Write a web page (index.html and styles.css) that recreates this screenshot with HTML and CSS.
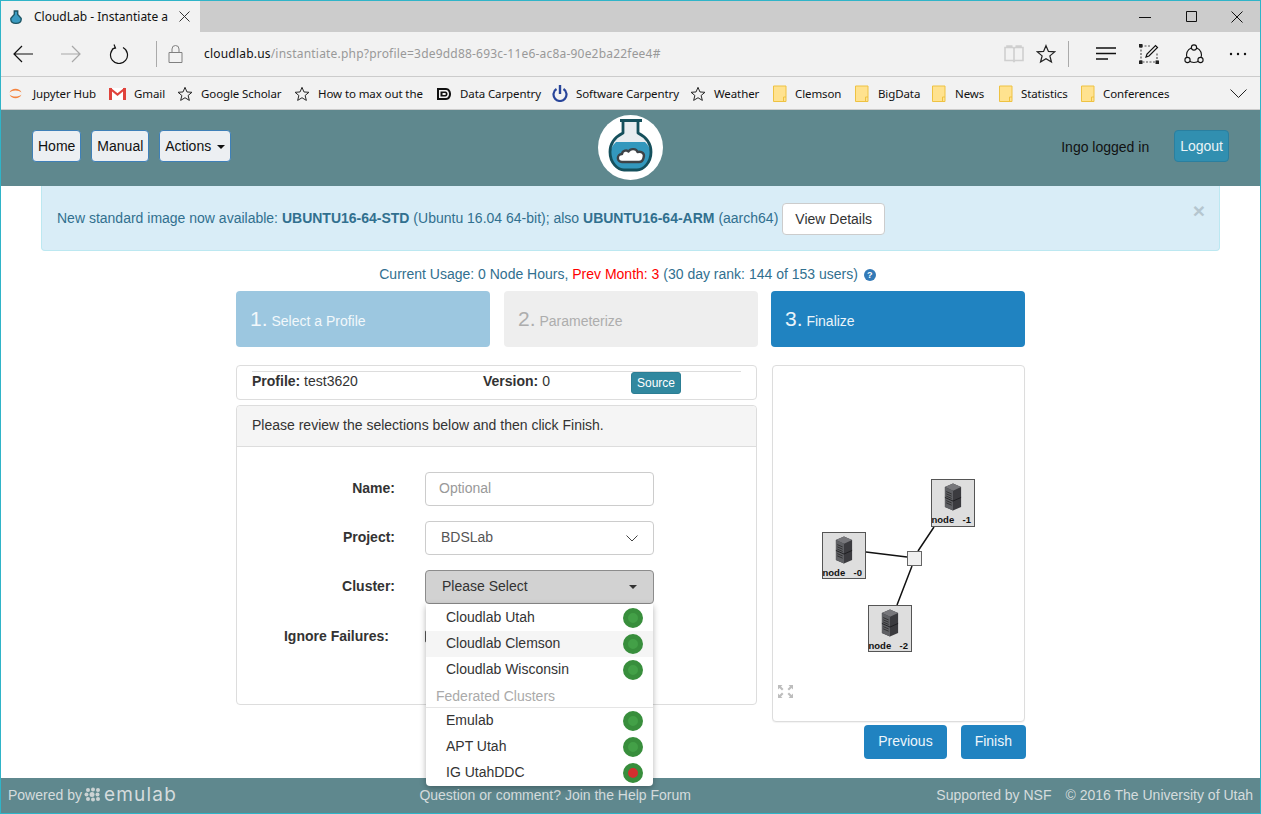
FILE: index.html
```html
<!DOCTYPE html>
<html lang="en">
<head>
  <meta charset="UTF-8">
  <title>CloudLab - Instantiate a Profile</title>
  <link rel="stylesheet" href="styles.css">
</head>
<body>
  <svg class="defs" width="0" height="0">
    <symbol id="star" viewBox="0 0 18 18"><path d="M9 1.500l2.200 5.200 5.600.4-4.300 3.600 1.400 5.500L9 13.200l-4.900 3 1.400-5.500L1.200 7.100l5.600-.4z" fill="none" stroke="#222" stroke-width="1.100"/></symbol>
    <symbol id="folder" viewBox="0 0 14 18"><path d="M.5 1h12.500v15.500H.5z" fill="#ffe28f" stroke="#eec242"/><path d="M10.500 16.500V12h2.500" fill="none" stroke="#eec242"/></symbol>
    <symbol id="server" viewBox="0 0 20 30">
      <path d="M10 0l9 4v22l-9 4-9-4V4z" fill="#3b3b3f"/>
      <path d="M10 0l9 4-9 4-9-4z" fill="#77777b"/>
      <path d="M1 4l9 4v22l-9-4z" fill="#5f6064"/>
      <path d="M2.500 9l6 2.600M2.500 11.500l6 2.600M2.500 14l6 2.600M2.500 19l6 2.600M2.500 21.500l6 2.600" stroke="#2c2c2e" stroke-width="1"/>
      <path d="M1 15.500l9 4 9-4" fill="none" stroke="#1d1d1f" stroke-width="1"/>
    </symbol>
  </svg>

  <div class="tabstrip">
    <div class="tab">
      <svg class="tab-icon" width="12" height="16" viewBox="0 0 14 16"><path d="M5 1h4v4l4 4.500c.5 4-2 6-6 6s-6.500-2-6-6L5 5z" fill="#3a9bc1" stroke="#1c5564" stroke-width="1.600"/></svg>
      <span class="tab-title">CloudLab - Instantiate a</span>
      <svg class="tab-close" width="11" height="11" viewBox="0 0 11 11"><path d="M.5.5l10 10M10.500.5l-10 10" stroke="#333" fill="none"/></svg>
    </div>
    <div class="window-controls">
      <svg width="12" height="12" viewBox="0 0 12 12"><path d="M0 6.500h12" stroke="#111"/></svg>
      <svg width="12" height="12" viewBox="0 0 12 12"><path d="M1.500.5h10v10h-10z" stroke="#111" fill="none"/></svg>
      <svg width="12" height="12" viewBox="0 0 12 12"><path d="M.5.5l11 11M11.500.5l-11 11" stroke="#111" fill="none"/></svg>
    </div>
  </div>

  <div class="toolbar">
    <svg class="tb-back" width="20" height="18" viewBox="0 0 20 18"><path d="M20 9H1M9 1L1 9l8 8" fill="none" stroke="#111" stroke-width="1.200"/></svg>
    <svg class="tb-forward" width="20" height="18" viewBox="0 0 20 18"><path d="M0 9h19M11 1l8 8-8 8" fill="none" stroke="#a8a8a8" stroke-width="1.200"/></svg>
    <svg class="tb-refresh" width="20" height="20" viewBox="0 0 20 20"><path d="M6 3.500a8.500 8.500 0 1 0 8 0M5 .5l1.500 3.500-3.500 1" fill="none" stroke="#111" stroke-width="1.200"/></svg>
    <span class="tb-sep tb-sep-first"></span>
    <svg class="tb-lock" width="15" height="18" viewBox="0 0 15 18"><path d="M1 7.500h13v10H1zM4 7.500V4a3.500 3.500 0 0 1 7 0v3.500" fill="none" stroke="#808080"/></svg>
    <div class="url"><span class="url-host">cloudlab.us</span>/instantiate.php?profile=3de9dd88-693c-11e6-ac8a-90e2ba22fee4#</div>
    <svg class="tb-reading" width="20" height="18" viewBox="0 0 20 18"><path d="M1 2.500h8l1 1 1-1h8v13h-8l-1 1-1-1H1zM10 3.500v13M3 2.500V1h5.500M17 2.500V1h-5.500" fill="none" stroke="#cfcfcf" stroke-width="1.600"/></svg>
    <svg class="tb-fav" width="20" height="20"><use href="#star"/></svg>
    <span class="tb-sep tb-sep-second"></span>
    <svg class="tb-hub" width="20" height="16" viewBox="0 0 20 16"><path d="M0 2h20M0 7.500h20M0 13h12" stroke="#111" stroke-width="1.300"/></svg>
    <svg class="tb-note" width="20" height="20" viewBox="0 0 20 20"><path d="M2 2v16h16V9M2 2h10" fill="none" stroke="#555" stroke-width="1.200" stroke-dasharray="2 1.500"/><path d="M7 13l1-3 8.500-8.500 2 2L10 12z" fill="none" stroke="#111" stroke-width="1.200"/><path d="M0 0h3.500v3.500H0zM0 16.500h3.500V20H0zM16.500 16.500H20V20h-3.500z" fill="#222"/></svg>
    <svg class="tb-share" width="20" height="20" viewBox="0 0 20 20"><circle cx="10" cy="11" r="7.500" fill="none" stroke="#111" stroke-width="1.100"/><circle cx="10" cy="3.500" r="2.600" fill="#f2f2f2" stroke="#111" stroke-width="1.100"/><circle cx="3.500" cy="16" r="2.600" fill="#f2f2f2" stroke="#111" stroke-width="1.100"/><circle cx="16.500" cy="16" r="2.600" fill="#f2f2f2" stroke="#111" stroke-width="1.100"/></svg>
    <svg class="tb-more" width="18" height="4" viewBox="0 0 18 4"><circle cx="2" cy="2" r="1.200" fill="#111"/><circle cx="9" cy="2" r="1.200" fill="#111"/><circle cx="16" cy="2" r="1.200" fill="#111"/></svg>
  </div>

  <div class="bookmarks">
    <a class="bm bm-jupyter">
      <svg width="13" height="13" viewBox="0 0 13 13"><path d="M.5 5.500C2.500.5 10.500.5 12.500 5.500 9.500 2.800 3.500 2.800.5 5.500zM.5 7.500c2 5 10 5 12 0-3 2.700-9 2.700-12 0z" fill="#f5843f"/></svg>
      Jupyter Hub
    </a>
    <a class="bm bm-gmail">
      <svg width="17" height="13" viewBox="0 0 17 13"><path d="M0 1h17v12H0z" fill="#fff"/><path d="M1.500 1v12M15.500 1v12" stroke="#e0433c" stroke-width="3"/><path d="M1 1.500l7.500 6 7.500-6" fill="none" stroke="#e0433c" stroke-width="2.200"/></svg>
      Gmail
    </a>
    <a class="bm bm-scholar"><svg width="16" height="18"><use href="#star"/></svg>Google Scholar</a>
    <a class="bm bm-max"><svg width="16" height="18"><use href="#star"/></svg>How to max out the</a>
    <a class="bm bm-carpentry">
      <svg width="16" height="16" viewBox="0 0 16 16"><path d="M1 2h9c3 0 5 3 5 6s-2 6-5 6H1z" fill="#111"/><path d="M3 4h7c1.800 0 3 2 3 4s-1.200 4-3 4H3z" fill="#f2f2f2"/><path d="M4.500 5.500h5c1 0 2 1.200 2 2.500s-1 2.500-2 2.500h-5zM6.500 7v2h2.500c.5 0 .8-.5.8-1s-.3-1-.8-1z" fill="#111" fill-rule="evenodd"/></svg>
      Data Carpentry
    </a>
    <a class="bm bm-software">
      <svg width="16" height="17" viewBox="0 0 16 17"><path d="M4.500 4a6.500 6.500 0 1 0 7 0" fill="none" stroke="#28459a" stroke-width="2.200"/><path d="M8 0v9" stroke="#28459a" stroke-width="2.400"/></svg>
      Software Carpentry
    </a>
    <a class="bm bm-weather"><svg width="16" height="18"><use href="#star"/></svg>Weather</a>
    <a class="bm bm-clemson"><svg width="14" height="18"><use href="#folder"/></svg>Clemson</a>
    <a class="bm bm-bigdata"><svg width="14" height="18"><use href="#folder"/></svg>BigData</a>
    <a class="bm bm-news"><svg width="14" height="18"><use href="#folder"/></svg>News</a>
    <a class="bm bm-statistics"><svg width="14" height="18"><use href="#folder"/></svg>Statistics</a>
    <a class="bm bm-conferences"><svg width="14" height="18"><use href="#folder"/></svg>Conferences</a>
    <svg class="bm-more" width="17" height="9" viewBox="0 0 17 9"><path d="M.5.500l8 8 8-8" fill="none" stroke="#222"/></svg>
  </div>

  <header class="site-header">
    <nav class="site-nav">
      <a class="btn-nav">Home</a>
      <a class="btn-nav">Manual</a>
      <a class="btn-nav">Actions <span class="caret"></span></a>
    </nav>
    <svg class="logo" width="65" height="65" viewBox="0 0 65 65">
      <circle cx="32.500" cy="32.500" r="32.500" fill="#fff"/>
      <path d="M25 6v12c-8 4-13 11-13 19 0 11 8 18 14 18h13c6 0 14-7 14-18 0-8-5-15-13-19V6z" fill="#e8edf0"/>
      <path d="M18 27h29c3 3 5.500 6 5.500 10 0 10-7.500 17.500-13.500 17.500H26C20 54.500 12.500 47 12.500 37c0-4 2.500-7 5.500-10z" fill="#3398bd"/>
      <path d="M22 5.500h22M25 5.500V18c-8 4-13 11-13 19 0 11 8 18 14 18h13c6 0 14-7 14-18 0-8-5-15-13-19V5.500" fill="none" stroke="#15505c" stroke-width="2.800" stroke-linejoin="round"/>
      <path d="M24 47c-5.500 0-5.500-8 0-8 .5-3.500 5-4.500 6.500-2.500 2-3.500 8-3 9 .5 5-1 7.500 2 6 6-.5 2.500-2.500 4-4.500 4z" fill="#fff" stroke="#3e4347" stroke-width="2.400" stroke-linejoin="round"/>
    </svg>
    <div class="site-user">
      <span class="user-name">Ingo logged in</span>
      <a class="btn-logout">Logout</a>
    </div>
  </header>

  <div class="alert">
    <span>New standard image now available: <b>UBUNTU16-64-STD</b> (Ubuntu 16.04 64-bit); also <b>UBUNTU16-64-ARM</b> (aarch64)</span>
    <a class="btn-details">View Details</a>
    <span class="alert-close">×</span>
  </div>

  <p class="usage">Current Usage: 0 Node Hours, <span class="usage-prev">Prev Month: 3</span> (30 day rank: 144 of 153 users) <span class="usage-help">?</span></p>

  <main class="wizard">
    <div class="steps">
      <div class="step step-done"><span class="step-num">1.</span> Select a Profile</div>
      <div class="step step-todo"><span class="step-num">2.</span> Parameterize</div>
      <div class="step step-active"><span class="step-num">3.</span> Finalize</div>
    </div>

    <div class="columns">
      <section class="left-col">
        <div class="profile-box">
          <div class="profile-row">
            <span class="profile-name"><b>Profile:</b> test3620</span>
            <span class="profile-version"><b>Version:</b> 0</span>
            <a class="btn-source">Source</a>
          </div>
        </div>
        <div class="panel">
          <div class="panel-heading">Please review the selections below and then click Finish.</div>
          <form class="review-form">
            <div class="form-row">
              <label>Name:</label>
              <input class="field" type="text" placeholder="Optional">
            </div>
            <div class="form-row">
              <label>Project:</label>
              <div class="field field-select">BDSLab
                <svg width="12" height="7" viewBox="0 0 12 7"><path d="M.5.500L6 6l5.500-5.500" fill="none" stroke="#444"/></svg>
              </div>
            </div>
            <div class="form-row">
              <label>Cluster:</label>
              <div class="cluster">
                <div class="cluster-toggle">Please Select <span class="caret"></span></div>
                <ul class="cluster-menu">
                  <li class="cluster-item">Cloudlab Utah <span class="dot"></span></li>
                  <li class="cluster-item cluster-item-hover">Cloudlab Clemson <span class="dot"></span></li>
                  <li class="cluster-item">Cloudlab Wisconsin <span class="dot"></span></li>
                  <li class="cluster-header">Federated Clusters</li>
                  <li class="cluster-item">Emulab <span class="dot"></span></li>
                  <li class="cluster-item">APT Utah <span class="dot"></span></li>
                  <li class="cluster-item">IG UtahDDC <span class="dot dot-bad"></span></li>
                </ul>
              </div>
            </div>
            <div class="form-row">
              <label class="label-ignore">Ignore Failures:</label>
              <span class="checkbox"></span>
            </div>
          </form>
        </div>
      </section>

      <section class="right-col">
        <div class="topology">
          <svg width="251" height="355" viewBox="0 0 251 355">
            <path d="M93 186l41 5M145 185l16-24M139 200l-15 39" stroke="#111" stroke-width="1.500"/>
            <rect class="topo-node" x="49.500" y="166.500" width="43" height="46"/>
            <rect class="topo-node" x="158.500" y="113.500" width="43" height="47"/>
            <rect class="topo-node" x="95.500" y="239.500" width="43" height="46"/>
            <rect x="134.500" y="185.500" width="14" height="14" fill="#f0f0f0" stroke="#666"/>
            <use href="#server" x="62" y="170" width="18" height="28"/>
            <use href="#server" x="171" y="117" width="18" height="28"/>
            <use href="#server" x="108" y="243" width="18" height="28"/>
            <text class="topo-label" x="49.500" y="209.500">node</text><text class="topo-label" x="80.500" y="209.500">-0</text>
            <text class="topo-label" x="158.500" y="156.500">node</text><text class="topo-label" x="189.500" y="156.500">-1</text>
            <text class="topo-label" x="95.500" y="282.500">node</text><text class="topo-label" x="126.500" y="282.500">-2</text>
            <g transform="translate(-1 -1)"><path d="M6 320h4.500l-1.500 1.500 2.500 2.500-1.500 1.500-2.500-2.500-1.500 1.500zM21 320v4.500l-1.500-1.500-2.500 2.500-1.500-1.500 2.500-2.500-1.500-1.500zM6 333v-4.500l1.500 1.500 2.500-2.500 1.500 1.500-2.500 2.500 1.500 1.500zM21 333h-4.500l1.500-1.500-2.500-2.500 1.500-1.500 2.500 2.500 1.500-1.500z" fill="#bdbdbd"/></g>
          </svg>
        </div>
        <div class="actions">
          <a class="btn-primary">Previous</a>
          <a class="btn-primary">Finish</a>
        </div>
      </section>
    </div>
  </main>

  <footer class="site-footer">
    <div class="powered">Powered by
      <svg width="18" height="15" viewBox="0 0 18 15"><g fill="#ccd3d4"><circle cx="4" cy="3" r="2"/><circle cx="9" cy="2.500" r="2"/><circle cx="14" cy="3" r="2"/><circle cx="2.500" cy="7.500" r="2"/><circle cx="8" cy="7.500" r="2.500"/><circle cx="13.500" cy="7.500" r="2"/><circle cx="4" cy="12" r="2"/><circle cx="9" cy="12.500" r="2"/><circle cx="14" cy="12" r="2"/></g></svg>
      <span class="emulab">emulab</span>
    </div>
    <div class="help-link">Question or comment? Join the Help Forum</div>
    <div class="legal"><span>Supported by NSF</span><span>© 2016 The University of Utah</span></div>
  </footer>
</body>
</html>
```

FILE: styles.css
```css
/* Page frame */
html, body {
  margin: 0;
  padding: 0;
}
body {
  width: 1261px;
  height: 814px;
  box-sizing: border-box;
  border: 1px solid #2fb4c8;
  display: flex;
  flex-direction: column;
  overflow: hidden;
  background-color: #fff;
  font-family: "Liberation Sans", Arial, sans-serif;
  font-size: 14px;
  line-height: 20px;
  color: #333;
}
.defs {
  position: absolute;
}

/* Browser chrome */
.tabstrip {
  height: 31px;
  flex: none;
  display: flex;
  justify-content: space-between;
  background-color: #ccc;
}
.tab {
  width: 199px;
  display: flex;
  align-items: center;
  background-color: #f2f2f2;
  font-family: "Noto Sans", sans-serif;
  font-size: 12px;
  color: #111;
}
.tab-icon {
  margin-left: 9px;
}
.tab-title {
  margin-left: 12px;
  width: 135px;
  overflow: hidden;
  white-space: nowrap;
}
.tab-close {
  margin-left: 10px;
}
.window-controls {
  display: flex;
  align-items: center;
  gap: 34px;
  padding-right: 17px;
}
.toolbar {
  height: 44px;
  flex: none;
  display: flex;
  align-items: center;
  background-color: #f2f2f2;
  border-bottom: 1px solid #ccc;
}
.tb-back { margin-left: 12px; }
.tb-forward { margin-left: 28px; }
.tb-refresh { margin-left: 28px; }
.tb-sep {
  width: 1px;
  height: 26px;
  background-color: #aaa;
}
.tb-sep-first { margin-left: 27px; }
.tb-lock { margin-left: 11px; }
.url {
  margin-left: 21px;
  flex: 1;
  font-family: "Noto Sans", sans-serif;
  font-size: 12px;
  letter-spacing: .2px;
  color: #999;
  white-space: nowrap;
}
.url-host {
  color: #111;
}
.tb-fav { margin-left: 12px; }
.tb-sep-second { margin-left: 12px; }
.tb-hub { margin-left: 27px; }
.tb-note { margin-left: 23px; }
.tb-share { margin-left: 25px; }
.tb-more { margin: 0 13px 0 25px; }

.bookmarks {
  height: 31px;
  flex: none;
  padding-top: 1px;
  display: flex;
  align-items: center;
  background-color: #f2f2f2;
  border-bottom: 1px solid #ccc;
  font-family: "Noto Sans", sans-serif;
  font-size: 11.5px;
  letter-spacing: -.1px;
  color: #111;
  white-space: nowrap;
}
.bm {
  display: flex;
  align-items: center;
  gap: 8px;
}
.bm-jupyter { width: 100px; margin-left: 8px; gap: 11px; }
.bm-gmail { width: 68px; }
.bm-scholar { width: 117px; }
.bm-max { width: 142px; }
.bm-carpentry { width: 116px; }
.bm-software { width: 138px; }
.bm-weather { width: 83px; }
.bm-clemson { width: 82px; }
.bm-bigdata { width: 77px; gap: 9px; }
.bm-news { width: 67px; gap: 9px; }
.bm-statistics { width: 82px; gap: 8px; }
.bm-conferences { width: 149px; gap: 8px; }

/* Site header */
.site-header {
  height: 76px;
  flex: none;
  box-sizing: border-box;
  padding-bottom: 1px;
  display: grid;
  grid-template-columns: 1fr auto 1fr;
  align-items: center;
  background-color: #5f888e;
}
.site-nav {
  display: flex;
  gap: 10px;
  padding-left: 31px;
  margin-bottom: 3px;
}
.btn-nav {
  padding: 5px;
  background-color: #eceff2;
  border: 1px solid #3f80b8;
  border-radius: 4px;
  color: #111;
}
.caret {
  display: inline-block;
  width: 0;
  height: 0;
  margin-left: 1px;
  vertical-align: middle;
  border-top: 4px solid;
  border-right: 4px solid transparent;
  border-left: 4px solid transparent;
}
.btn-nav .caret {
  margin-left: 2px;
}
.site-user {
  display: flex;
  justify-content: flex-end;
  align-items: center;
  padding-right: 31px;
  margin-bottom: 3px;
}
.user-name {
  margin: 2px 25px 0 0;
  color: #111;
}
.btn-logout {
  padding: 5px;
  background-color: #318fb0;
  border: 1px solid #2a7f9f;
  border-radius: 4px;
  color: #eaf4f7;
}

/* Notice */
.alert {
  height: 65px;
  flex: none;
  box-sizing: border-box;
  margin: 0 40px;
  padding: 0 15px;
  position: relative;
  display: flex;
  align-items: center;
  gap: 4px;
  background-color: #d9edf7;
  border: 1px solid #bce8f1;
  border-top: none;
  border-radius: 0 0 4px 4px;
  color: #31708f;
}
.btn-details {
  margin-top: 2px;
  padding: 5px 12px;
  background-color: #fff;
  border: 1px solid #ccc;
  border-radius: 4px;
  color: #333;
}
.alert-close {
  position: absolute;
  top: 15px;
  right: 14px;
  font-size: 21px;
  font-weight: bold;
  color: #b5c6cf;
}

.usage {
  margin: 13px 0 7px;
  padding-right: 6px;
  text-align: center;
  color: #31708f;
}
.usage-prev {
  color: #f00;
}
.usage-help {
  display: inline-block;
  width: 12px;
  height: 12px;
  margin-left: 2px;
  border-radius: 50%;
  background-color: #337ab7;
  color: #fff;
  font-size: 9px;
  font-weight: bold;
  line-height: 12px;
  text-align: center;
  vertical-align: 1px;
}

/* Wizard */
.wizard {
  flex: 1;
  width: 790px;
  margin-left: 235px;
}
.steps {
  display: grid;
  grid-template-columns: 254px 254px 254px;
  column-gap: 14px;
}
.step {
  height: 56px;
  box-sizing: border-box;
  padding: 18px 14px 0;
  border-radius: 4px;
  font-size: 14px;
}
.step-num {
  font-size: 21px;
}
.step-done {
  background-color: #9cc7e0;
  color: #f2f8fb;
}
.step-todo {
  background-color: #eee;
  color: #adadad;
}
.step-active {
  margin: 0 1px 0 -1px;
  background-color: #2083c1;
  color: #eaf4fa;
}
.columns {
  display: flex;
  margin-top: 18px;
}
.left-col {
  width: 521px;
}
.right-col {
  width: 253px;
  margin-left: 15px;
}
.profile-box {
  height: 35px;
  box-sizing: border-box;
  padding: 5px 15px 0;
  background-color: #fff;
  border: 1px solid #ddd;
  border-radius: 4px;
}
.profile-row {
  display: flex;
  height: 28px;
  box-sizing: border-box;
  border-top: 1px solid #ddd;
}
.profile-row b {
  color: #333;
}
.profile-name {
  width: 231px;
  margin-top: -1px;
}
.profile-version {
  width: 148px;
  margin-top: -1px;
}
.btn-source {
  height: 22px;
  box-sizing: border-box;
  padding: 0 5px;
  background-color: #31889f;
  border: 1px solid #2c7e94;
  border-radius: 3px;
  color: #fff;
  font-size: 12px;
  line-height: 20px;
}
.panel {
  height: 300px;
  box-sizing: border-box;
  margin-top: 5px;
  background-color: #fff;
  border: 1px solid #ddd;
  border-radius: 4px;
}
.panel-heading {
  height: 41px;
  box-sizing: border-box;
  padding: 9px 15px;
  background-color: #f5f5f5;
  border-bottom: 1px solid #ddd;
  border-radius: 4px 4px 0 0;
}
.review-form {
  padding-top: 25px;
}
.form-row {
  display: flex;
  align-items: center;
  height: 34px;
  margin-bottom: 15px;
}
.form-row label {
  width: 158px;
  padding-bottom: 2px;
  text-align: right;
  font-weight: bold;
}
.form-row .label-ignore {
  width: 152px;
  margin-right: 6px;
  padding-bottom: 0;
}
.field {
  width: 229px;
  height: 34px;
  box-sizing: border-box;
  margin-left: 30px;
  padding: 4px 13px 6px;
  background-color: #fff;
  border: 1px solid #ccc;
  border-radius: 4px;
  font-family: inherit;
  font-size: 14px;
  color: #555;
}
.field::placeholder {
  color: #999;
}
.field-select {
  display: flex;
  justify-content: space-between;
  align-items: center;
  padding: 0 15px 2px;
}
.field-select svg {
  margin-top: 2px;
}
.cluster {
  position: relative;
  width: 229px;
  margin-left: 30px;
}
.cluster-toggle {
  height: 34px;
  box-sizing: border-box;
  display: flex;
  justify-content: space-between;
  align-items: center;
  padding: 0 16px 2px;
  background-color: #d2d2d2;
  border: 1px solid #8c8c8c;
  border-radius: 4px;
  color: #333;
}
.cluster-toggle .caret {
  margin-top: 2px;
}
.cluster-menu {
  position: absolute;
  z-index: 5;
  top: 34px;
  left: 1px;
  width: 227px;
  box-sizing: border-box;
  height: 182px;
  margin: 0;
  padding: 1px 0 0;
  list-style: none;
  background-color: #fff;
  border-radius: 0 0 4px 4px;
  box-shadow: 0 2px 6px rgba(0, 0, 0, .3);
}
.cluster-item {
  height: 26px;
  box-sizing: border-box;
  display: flex;
  justify-content: space-between;
  align-items: flex-start;
  padding: 2px 10px 0 20px;
}
.cluster-item-hover {
  background-color: #f5f5f5;
}
.cluster-header {
  height: 25px;
  box-sizing: border-box;
  padding: 2px 10px 0;
  border-bottom: 1px solid #e5e5e5;
  color: #aaa;
  line-height: 23px;
}
.dot {
  width: 10px;
  height: 10px;
  margin-top: 1px;
  border: 5px solid #388e3c;
  border-radius: 50%;
  background-color: #43a047;
}
.dot-bad {
  background-color: #d32f2f;
}
.checkbox {
  width: 13px;
  height: 13px;
  box-sizing: border-box;
  margin-left: 30px;
  border: 1px solid #555;
  border-radius: 2px;
}

/* Topology */
.topology {
  height: 357px;
  box-sizing: border-box;
  background-color: #fff;
  border: 1px solid #ddd;
  border-radius: 4px;
  box-shadow: 0 1px 1px rgba(0, 0, 0, .05);
}
.topo-node {
  fill: #dedede;
  stroke: #555;
}
.topo-label {
  font-size: 9.5px;
  font-weight: bold;
  fill: #111;
}
.actions {
  display: flex;
  justify-content: flex-end;
  gap: 14px;
  margin-top: 3px;
  margin-right: -1px;
}
.btn-primary {
  height: 34px;
  box-sizing: border-box;
  padding: 6px 14px;
  background-color: #2083c1;
  border-radius: 4px;
  color: #eef6fb;
}

/* Footer */
.site-footer {
  height: 35px;
  flex: none;
  box-sizing: border-box;
  display: flex;
  justify-content: space-between;
  align-items: center;
  padding: 0 7px 2px;
  background-color: #5f888e;
  color: #d5dcdd;
}
.powered {
  display: flex;
  align-items: center;
  gap: 2px;
}
.emulab {
  font-family: "Inter", sans-serif;
  font-size: 19px;
  letter-spacing: 1.2px;
  line-height: 18px;
}
.help-link {
  margin-right: 3px;
}
.legal {
  display: flex;
  gap: 14px;
}
```
